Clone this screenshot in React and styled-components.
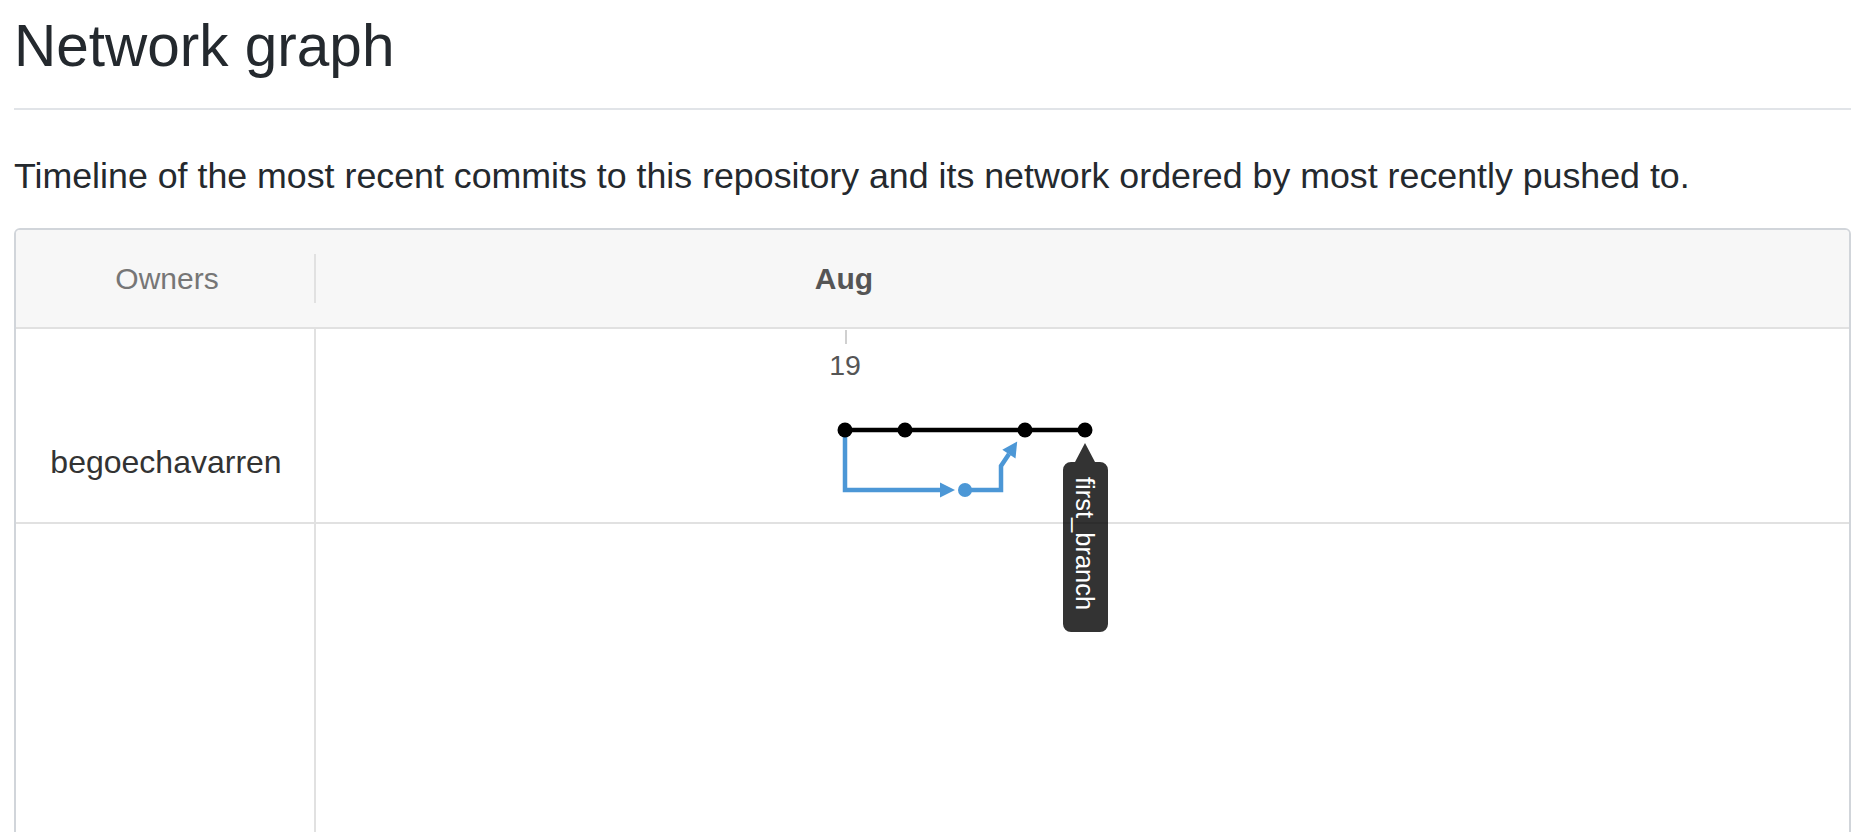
import React from 'react';
import styled, { createGlobalStyle } from 'styled-components';

const GlobalStyle = createGlobalStyle`
  *, *::before, *::after {
    box-sizing: border-box;
  }
  html, body {
    margin: 0;
    padding: 0;
    background: #fff;
    overflow: hidden;
  }
  body {
    font-family: "Liberation Sans", Arial, Helvetica, sans-serif;
    color: #24292e;
  }
`;

const BLUE = '#4c97d6';
const LANE_Y = 101;
const BRANCH_Y = 161;
const COL0 = 529;
const STEP = 60;

const commits = [
  { col: 0, lane: 'master' },
  { col: 1, lane: 'master' },
  { col: 2, lane: 'branch' },
  { col: 3, lane: 'master' },
  { col: 4, lane: 'master' },
];

const colX = (col) => COL0 + col * STEP;

const Page = styled.div`
  padding: 0 23px 0 14px;
`;

const Subhead = styled.div`
  padding: 11px 0 27px;
  border-bottom: 2px solid #e1e4e8;
`;

const Heading = styled.h2`
  margin: 0;
  font-size: 58.5px;
  line-height: 70px;
  font-weight: 400;
  color: #24292e;
`;

const Lead = styled.p`
  margin: 41px 0 27px;
  font-size: 35.75px;
  line-height: 50px;
  color: #24292e;
`;

const Network = styled.div`
  border: 2px solid #d1d5da;
  border-radius: 6px;
  overflow: hidden;
`;

const HeaderRow = styled.div`
  display: flex;
  align-items: center;
  height: 99px;
  background: #f7f7f7;
  border-bottom: 2px solid #e1e1e1;
`;

const OwnersHead = styled.div`
  width: 298px;
  padding-left: 4px;
  text-align: center;
  font-size: 30px;
  color: #767676;
`;

const HeadRule = styled.div`
  width: 2px;
  height: 49px;
  background: #e1e1e1;
`;

const MonthStrip = styled.div`
  position: relative;
  flex: 1;
  align-self: stretch;
`;

const MonthLabel = styled.span`
  position: absolute;
  top: 50%;
  transform: translate(-50%, -50%);
  font-size: 30px;
  font-weight: 700;
  color: #555;
`;

const Body = styled.div`
  position: relative;
  display: grid;
  grid-template-columns: 300px 1fr;
  grid-template-rows: 195px 420px;
`;

const OwnerCell = styled.div`
  border-right: 2px solid #e1e1e1;
  border-bottom: ${({ $last }) => ($last ? 'none' : '2px solid #e1e1e1')};
  padding-top: ${({ $pad }) => $pad || 0}px;
  padding-left: 2px;
  text-align: center;
  font-size: 32px;
  line-height: 40px;
  color: #333;
`;

const GraphCell = styled.div`
  border-bottom: ${({ $last }) => ($last ? 'none' : '2px solid #e1e1e1')};
`;

const Canvas = styled.svg`
  position: absolute;
  left: 300px;
  top: 0;
  width: calc(100% - 300px);
  height: 100%;
  overflow: visible;
  pointer-events: none;
`;

const BranchLabel = ({ x, y, name }) => {
  const top = y + 19;
  const l = x - 22;
  const r = x + 23;
  const b = top + 170;
  return (
    <g>
      <path
        d={`M${l + 8} ${top} H${x - 10} L${x} ${y} L${x + 10} ${top} H${r - 8} A8 8 0 0 1 ${r} ${top + 8} V${b - 8} A8 8 0 0 1 ${r - 8} ${b} H${l + 8} A8 8 0 0 1 ${l} ${b - 8} V${top + 8} A8 8 0 0 1 ${l + 8} ${top} Z`}
        fill="rgba(0,0,0,0.8)"
      />
      <text
        transform={`translate(${x} ${top + 15}) rotate(90)`}
        fontSize="25.5"
        fill="#fff"
        dominantBaseline="central"
      >
        {name}
      </text>
    </g>
  );
};

const Graph = () => {
  const first = colX(0);
  const blue = colX(2);
  const last = colX(4);
  return (
    <Canvas>
      <line x1={first + 1} y1={1} x2={first + 1} y2={15} stroke="#d0d0d0" strokeWidth={2} />
      <text x={first} y={46} textAnchor="middle" fontSize="28.5" fill="#555">
        19
      </text>

      <path
        d={`M${first} ${LANE_Y} V${BRANCH_Y} H${blue - 24}`}
        fill="none"
        stroke={BLUE}
        strokeWidth={4.5}
        strokeLinejoin="miter"
      />
      <polygon
        points={`${blue - 25},${BRANCH_Y - 7.5} ${blue - 10},${BRANCH_Y} ${blue - 25},${BRANCH_Y + 7.5}`}
        fill={BLUE}
      />
      <path
        d={`M${blue} ${BRANCH_Y} H${blue + 36} V137 L693 125`}
        fill="none"
        stroke={BLUE}
        strokeWidth={4.5}
        strokeLinejoin="miter"
      />
      <polygon points="699.5,129.5 701.2,112.6 686.3,120.7" fill={BLUE} />

      <line x1={first} y1={LANE_Y} x2={last} y2={LANE_Y} stroke="#000" strokeWidth={4.5} />
      {commits.map((c) => (
        <circle
          key={c.col}
          cx={colX(c.col)}
          cy={c.lane === 'master' ? LANE_Y : BRANCH_Y}
          r={c.lane === 'master' ? 7.5 : 7}
          fill={c.lane === 'master' ? '#000' : BLUE}
        />
      ))}
      <BranchLabel x={last} y={LANE_Y + 13} name="first_branch" />
    </Canvas>
  );
};

const App = () => {
  return (
    <>
      <GlobalStyle />
      <Page>
        <Subhead>
          <Heading>Network graph</Heading>
        </Subhead>
        <Lead>
          Timeline of the most recent commits to this repository and its network ordered by most
          recently pushed to.
        </Lead>
        <Network>
          <HeaderRow>
            <OwnersHead>Owners</OwnersHead>
            <HeadRule />
            <MonthStrip>
              <MonthLabel style={{ left: colX(0) - 1 }}>Aug</MonthLabel>
            </MonthStrip>
          </HeaderRow>
          <Body>
            <OwnerCell $pad={113}>begoechavarren</OwnerCell>
            <GraphCell />
            <OwnerCell $last />
            <GraphCell $last />
            <Graph />
          </Body>
        </Network>
      </Page>
    </>
  );
};

export default App;
